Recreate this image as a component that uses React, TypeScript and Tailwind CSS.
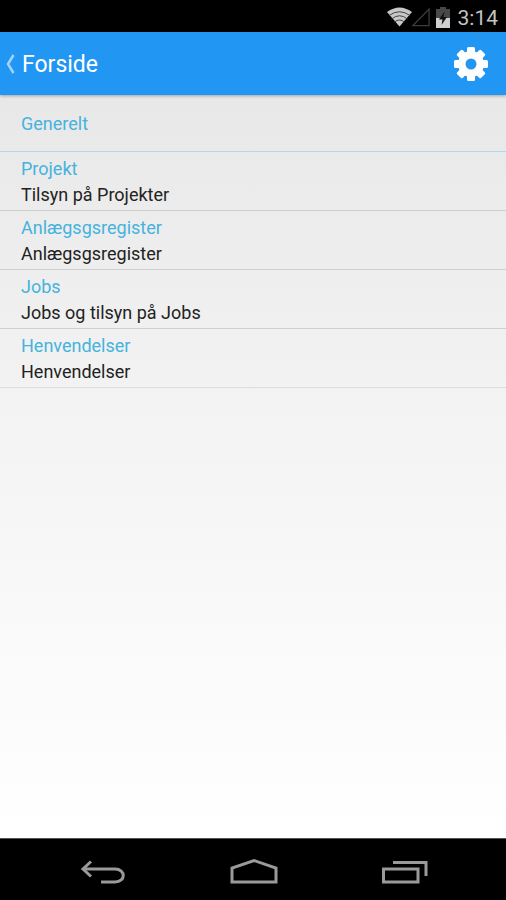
import React from 'react';

const items = [
  { title: 'Projekt', text: 'Tilsyn på Projekter' },
  { title: 'Anlægsgsregister', text: 'Anlægsgsregister' },
  { title: 'Jobs', text: 'Jobs og tilsyn på Jobs' },
  { title: 'Henvendelser', text: 'Henvendelser' },
];

const StatusBar = () => (
  <div className="flex h-8 items-center justify-end bg-black pt-0.5 pr-2 text-[#c4c4c4]">
    <svg width="25" height="20" viewBox="0 0 25 20" fill="none">
      <path d="M0 5 Q12.500 -4 25 5 L12.500 19.500 Z" fill="#c8c8c8" />
      <path d="M2 8.500 Q12.500 1 23 8.500 M4.500 12 Q12.500 5.500 20.500 12 M7.500 15 Q12.500 11 17.500 15" stroke="#444" strokeWidth="1" />
    </svg>
    <svg className="mr-1.5" width="18" height="20" viewBox="0 0 19 20" fill="none">
      <path d="M1 19 L18 1.500 V19 Z" stroke="#3c3c3c" strokeWidth="1.300" />
    </svg>
    <svg className="mr-2" width="14" height="21" viewBox="0 0 14 21">
      <path d="M4 0 H10 V2 H14 V11 H0 V2 H4 Z" fill="#484848" />
      <path d="M0 11 H14 V21 H0 Z" fill="#d0d0d0" />
      <path d="M8.500 4.500 L3 12.500 H6.500 L5.500 18 L11 10 H7.500 Z" fill="#111" />
    </svg>
    <span className="pt-0.5 text-[21px] leading-7">3:14</span>
  </div>
);

const AppBar = () => (
  <header className="relative flex h-[63px] items-center justify-between bg-[#2196f3] pr-[17px] pl-1.5 text-white shadow-[0_1px_3px_rgba(0,0,0,0.3)]">
    <button type="button" className="flex items-center gap-[7px]">
      <svg width="9" height="20" viewBox="0 0 9 20" fill="none">
        <path d="M7.500 1 L2 10 L7.500 19" stroke="#a3d3fa" strokeWidth="2.500" />
      </svg>
      <span className="pt-0.5 text-[23px] leading-8">Forside</span>
    </button>
    <button type="button" aria-label="Settings">
      <svg width="36" height="36" viewBox="-18 -18 36 36" fill="white">
        <g>
          <rect x="-4" y="-17" width="8" height="34" rx="1.500" />
          <rect x="-4" y="-17" width="8" height="34" rx="1.500" transform="rotate(45)" />
          <rect x="-4" y="-17" width="8" height="34" rx="1.500" transform="rotate(90)" />
          <rect x="-4" y="-17" width="8" height="34" rx="1.500" transform="rotate(135)" />
        </g>
        <circle r="13" />
        <circle r="5.500" fill="#2196f3" />
      </svg>
    </button>
  </header>
);

const NavBar = () => (
  <nav className="flex h-[62px] items-center justify-center gap-[102px] border-t border-[#555] bg-black pt-1 pl-0.5">
    <button type="button" aria-label="Back">
      <svg width="48" height="28" viewBox="0 0 48 28" fill="none" stroke="#9a9a9a" strokeWidth="3">
        <path d="M4 11 H36 C47 11 47 24 36 24 H22" />
        <path d="M12 3.500 L4 11 L12 18.500" />
      </svg>
    </button>
    <button type="button" aria-label="Home">
      <svg width="50" height="28" viewBox="0 0 50 28" fill="none" stroke="#9a9a9a" strokeWidth="3">
        <path d="M3 24 V10 L25 2.500 L47 10 V24 Z" />
      </svg>
    </button>
    <button type="button" aria-label="Recent apps">
      <svg width="48" height="28" viewBox="0 0 48 28" fill="none" stroke="#9a9a9a" strokeWidth="3">
        <path d="M2.500 11 H37 V24 H2.500 Z" />
        <path d="M12 4.500 H45 V18" />
      </svg>
    </button>
  </nav>
);

const App = () => {
  return (
    <div className="flex min-h-screen flex-col bg-white font-['Roboto',sans-serif]">
      <StatusBar />
      <AppBar />
      <main className="flex-1 bg-linear-to-b from-[#e8e8e8] via-[#f5f5f5] to-white text-lg">
        <h2 className="border-b border-b-[#b0d8ea] px-[21px] pt-4 pb-3.5 leading-[26px] text-[#45b3dd]">Generelt</h2>
        <ul>
          {items.map((item) => (
            <li key={item.title} className="border-b border-b-[#cfcfcf] last:border-b-[#dddddd]">
              <button type="button" className="block w-full px-[21px] pt-1 pb-0.5 text-left leading-[26px]">
                <span className="block text-[#45b3dd]">{item.title}</span>
                <span className="block text-[#222]">{item.text}</span>
              </button>
            </li>
          ))}
        </ul>
      </main>
      <NavBar />
    </div>
  );
};

export default App;
